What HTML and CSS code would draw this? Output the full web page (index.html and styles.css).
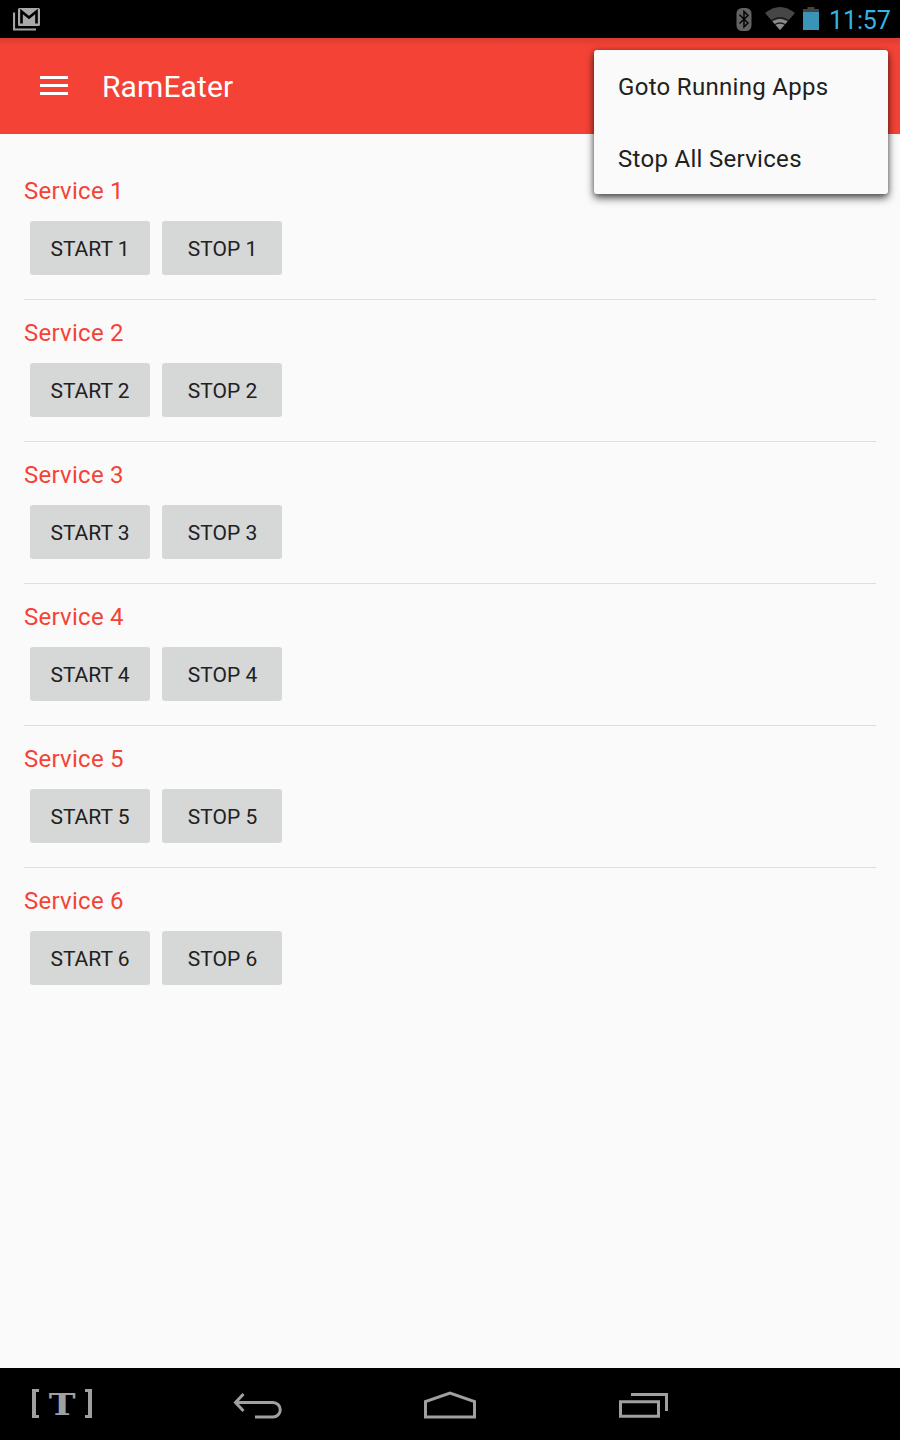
FILE: index.html
```html
<!DOCTYPE html>
<html lang="en">
<head>
<meta charset="utf-8">
<title>RamEater</title>
<link rel="stylesheet" href="styles.css">
</head>
<body>
<div class="screen">
  <header class="status">
    <svg class="mail" width="28" height="23" viewBox="0 0 28 23">
      <path d="M1 4.500V21.500H23" fill="none" stroke="#a3a3a3" stroke-width="2.200"/>
      <rect x="5" y="0" width="22" height="18" rx="1.500" fill="#a9a9a9"/>
      <path d="M8.500 15.500V3.500L16 9.500L23.500 3.500V15.500" fill="none" stroke="#000" stroke-width="2.600"/>
    </svg>
    <div class="indicators">
      <svg class="bluetooth" width="16" height="23" viewBox="0 0 16 23">
        <rect x=".500" y="0" width="15" height="23" rx="5.500" fill="#626262"/>
        <path d="M3.500 6.800L12 15L8 19V3.500L12 7.500L3.500 15.500" fill="none" stroke="#050505" stroke-width="1.500"/>
      </svg>
      <svg class="wifi" width="30" height="23" viewBox="0 0 30 23">
        <path d="M0 6Q15-6 30 6L15 23Z" fill="#464646"/>
        <path d="M7.500 14.500Q15 9.500 22.500 14.500L15 23Z" fill="#8a8a8a"/>
        <path d="M6.500 13.500Q15 8 23.500 13.500M10 17.500Q15 14.500 20 17.500" fill="none" stroke="#181818" stroke-width="1.300"/>
      </svg>
      <svg class="battery" width="16" height="24" viewBox="0 0 16 24">
        <path d="M0 2H4.500V0H11.500V2H16V6H0Z" fill="#444"/>
        <rect y="5" width="16" height="18" fill="#3a94b8"/>
      </svg>
      <span class="clock">11:57</span>
    </div>
  </header>
  <div class="appbar">
    <div class="burger"><i></i><i></i><i></i></div>
    <h1 class="title">RamEater</h1>
    <div class="menu">
      <div class="menu-item goto">Goto Running Apps</div>
      <div class="menu-item stop-all">Stop All Services</div>
    </div>
  </div>
  <main class="content">
    <section class="service"><h2 class="name">Service 1</h2><div class="buttons"><button class="button">START 1</button><button class="button stop">STOP 1</button></div></section>
    <section class="service"><h2 class="name">Service 2</h2><div class="buttons"><button class="button">START 2</button><button class="button stop">STOP 2</button></div></section>
    <section class="service"><h2 class="name">Service 3</h2><div class="buttons"><button class="button">START 3</button><button class="button stop">STOP 3</button></div></section>
    <section class="service"><h2 class="name">Service 4</h2><div class="buttons"><button class="button">START 4</button><button class="button stop">STOP 4</button></div></section>
    <section class="service"><h2 class="name">Service 5</h2><div class="buttons"><button class="button">START 5</button><button class="button stop">STOP 5</button></div></section>
    <section class="service"><h2 class="name">Service 6</h2><div class="buttons"><button class="button">START 6</button><button class="button stop">STOP 6</button></div></section>
  </main>
  <nav class="navbar">
    <div class="text-tool"><span class="bracket open"></span><span class="letter">T</span><span class="bracket close"></span></div>
    <svg class="back" width="50" height="28" viewBox="0 0 50 28">
      <path d="M2 10.500H40A7.200 7.200 0 0 1 40 25H22M10.500 2L2.500 10.500L10.500 19" fill="none" stroke="#a0a0a0" stroke-width="3"/>
    </svg>
    <svg class="home" width="52" height="28" viewBox="0 0 52 28">
      <path d="M1.500 26V10.500L26 2L50.500 10.500V26Z" fill="none" stroke="#a0a0a0" stroke-width="3"/>
    </svg>
    <svg class="recents" width="50" height="26" viewBox="0 0 50 26">
      <path d="M1.500 8.800H39.500V23.200H1.500ZM12 1.500H47.500V18" fill="none" stroke="#a0a0a0" stroke-width="3"/>
    </svg>
  </nav>
</div>
</body>
</html>
```
FILE: styles.css
```css
body {
  margin: 0;
  font-family: Roboto, sans-serif;
  background: #fafafa;
}
.screen {
  display: flex;
  flex-direction: column;
  height: 1440px;
}
.status {
  display: flex;
  justify-content: space-between;
  align-items: flex-start;
  height: 38px;
  box-sizing: border-box;
  padding: 7px 10px 0 13px;
  background: #000;
}
.mail { margin-top: 1px; }
.indicators { display: flex; }
.bluetooth { margin: 1px 13px 0 0; }
.wifi { margin-right: 8px; }
.clock {
  width: 61px;
  margin-left: 10px;
  font-size: 25px;
  line-height: 27px;
  letter-spacing: -.1px;
  white-space: nowrap;
  color: #33b5e5;
}
.appbar {
  position: relative;
  display: flex;
  align-items: center;
  height: 96px;
  box-sizing: border-box;
  padding-left: 40px;
  background: linear-gradient(#d93b30, #f44336 8px);
}
.burger {
  display: grid;
  gap: 5px;
  width: 28px;
  margin-bottom: 1px;
}
.burger i { height: 3px; background: #fff; }
.title {
  margin: 2px 0 0 34px;
  font-size: 30px;
  font-weight: 400;
  line-height: 36px;
  letter-spacing: .1px;
  color: #fff;
}
.menu {
  position: absolute;
  top: 12px;
  right: 12px;
  width: 294px;
  height: 144px;
  border-radius: 3px;
  background: #fafafa;
  box-shadow: 0 4px 8px rgba(0, 0, 0, .65), 0 1px 5px rgba(0, 0, 0, .25);
}
.menu-item {
  height: 72px;
  padding-left: 24px;
  font-size: 24px;
  line-height: 74px;
  letter-spacing: .3px;
  color: #212121;
}
.content {
  flex: 1;
  padding: 24px 24px 0;
}
.service {
  height: 142px;
  box-sizing: border-box;
  padding-top: 18px;
  border-bottom: 1px solid #dedede;
}
.service:last-child { border: 0; }
.name {
  margin: 0 0 15px;
  font-size: 24px;
  font-weight: 400;
  line-height: 30px;
  letter-spacing: .26px;
  color: #f44336;
}
.buttons { display: flex; gap: 12px; padding-left: 6px; }
.button {
  width: 120px;
  height: 54px;
  padding: 2px 0 0;
  border: 0;
  border-radius: 3px;
  font: 21px Roboto, sans-serif;
  background: #d6d7d7;
  color: #212121;
}
.stop { padding-left: 1px; }
.navbar {
  display: flex;
  align-items: flex-start;
  height: 72px;
  box-sizing: border-box;
  padding: 21px 0 0 32px;
  background: #000;
}
.text-tool {
  display: flex;
  justify-content: space-between;
  width: 60px;
  height: 29px;
}
.bracket {
  width: 7px;
  box-sizing: border-box;
  border: 3px solid #a0a0a0;
}
.open { border-right: 0; border-left-width: 4px; }
.close { border-left: 0; border-right-width: 4px; }
.letter {
  font: bold 30px/32px "DejaVu Serif", serif;
  color: #a0a0a0;
  transform: scaleX(1.2);
}
.back { margin: 3px 0 0 141px; }
.home { margin: 2px 0 0 141px; }
.recents { margin: 4px 0 0 143px; }
```
